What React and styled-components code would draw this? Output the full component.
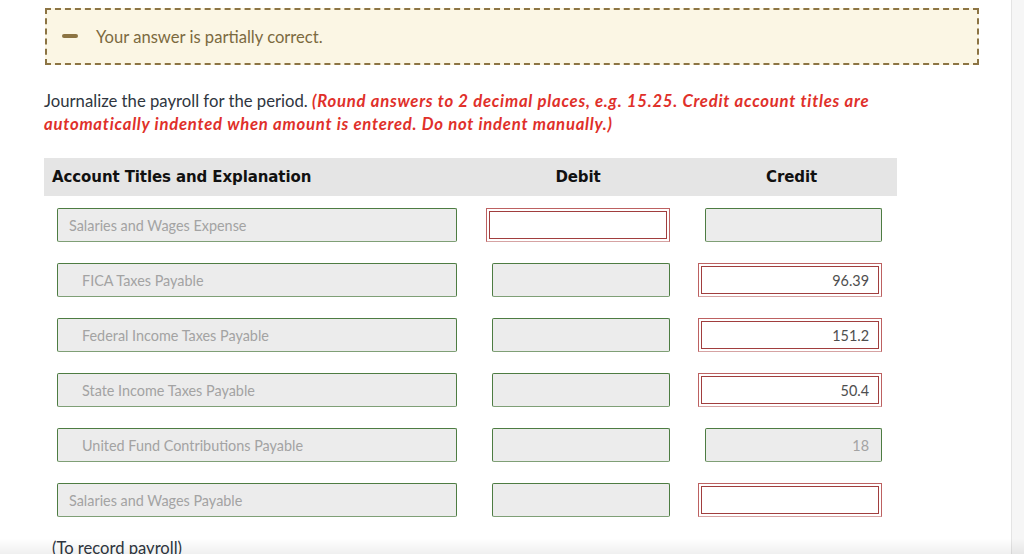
import React from 'react';
import styled, { createGlobalStyle } from 'styled-components';

const GlobalStyle = createGlobalStyle`
  html, body {
    margin: 0;
    padding: 0;
    background: #ffffff;
  }
  body {
    font-family: Lato, "Liberation Sans", sans-serif;
    overflow: hidden;
  }
`;

const Frame = styled.div`
  display: flex;
  width: 1024px;
  height: 554px;
  overflow: hidden;
`;

const Main = styled.main`
  flex: 1;
  padding: 8px 0 0 44px;
`;

const Gutter = styled.div`
  width: 12px;
  border-left: 1px solid #e4e4e4;
  background: #f6f6f6;
`;

const Banner = styled.div`
  display: flex;
  align-items: center;
  gap: 18px;
  box-sizing: border-box;
  margin-left: 1px;
  width: 934px;
  height: 57px;
  padding-left: 15px;
  background: #fbf6e4;
  border: 2px dashed #8c7443;
  font-size: 16.6px;
  color: #7b6a3f;
`;

const Minus = styled.span`
  display: block;
  width: 16px;
  height: 4px;
  border-radius: 2px;
  background: #8c7443;
  margin-top: -2px;
`;

const Instructions = styled.p`
  margin: 25px 0 0;
  width: 880px;
  font-size: 16.7px;
  line-height: 23px;
  color: #2f3640;
`;

const Note = styled.span`
  color: #e0302a;
  font-weight: 700;
  font-style: italic;
  letter-spacing: 0.75px;
`;

const Table = styled.div`
  display: grid;
  grid-template-columns: 430px 212px 211px;
  row-gap: 21px;
  margin-top: 22px;
  width: 853px;
`;

const HeadCell = styled.div`
  display: flex;
  align-items: center;
  justify-content: ${(p) => (p.$center ? 'center' : 'flex-start')};
  height: 38px;
  padding-left: ${(p) => (p.$center ? '0' : '8px')};
  padding-right: ${(p) => p.$pr || 0}px;
  margin-bottom: -9px;
  background: #e5e5e5;
  font-family: "DejaVu Sans", Verdana, sans-serif;
  font-weight: 700;
  font-size: 15px;
  letter-spacing: -0.1px;
  color: #111;
`;

const Cell = styled.div`
  display: flex;
  justify-content: ${(p) => (p.$end ? 'flex-end' : 'flex-start')};
  padding-left: ${(p) => p.$pl || 0}px;
  padding-right: ${(p) => p.$pr || 0}px;
`;

const Field = styled.div`
  box-sizing: border-box;
  display: flex;
  align-items: center;
  justify-content: ${(p) => (p.$num ? 'flex-end' : 'flex-start')};
  width: ${(p) => p.$w}px;
  height: 34px;
  padding: 0 12px 0 ${(p) => (p.$indent ? 24 : 11)}px;
  background: #ececec;
  border: 1px solid #4d7c42;
  border-bottom-color: #7f9f76;
  border-radius: 2px;
  font-size: 14.4px;
  color: #a3a3a3;
`;

const WrongField = styled.div`
  box-sizing: border-box;
  display: flex;
  align-items: center;
  justify-content: flex-end;
  width: ${(p) => p.$w}px;
  height: 34px;
  padding: 0 12px;
  background: #ffffff;
  border: 1px solid #bd6161;
  border-bottom-color: #d6a3a3;
  box-shadow: inset 0 0 0 2px #ffffff, inset 0 0 0 3px #a13e3e;
  font-size: 14.4px;
  color: #4e4e4e;
`;

const Footnote = styled.div`
  margin: 20px 0 0 8px;
  font-size: 16.6px;
  line-height: 23px;
  color: #2f3640;
`;

const BottomShade = styled.div`
  position: fixed;
  left: 0;
  right: 0;
  bottom: 0;
  height: 16px;
  pointer-events: none;
  background: linear-gradient(rgba(0, 0, 0, 0), rgba(0, 0, 0, 0.06));
`;

const rows = [
  { title: 'Salaries and Wages Expense', debit: { wrong: true }, credit: {} },
  { title: 'FICA Taxes Payable', indent: true, debit: {}, credit: { wrong: true, value: '96.39' } },
  { title: 'Federal Income Taxes Payable', indent: true, debit: {}, credit: { wrong: true, value: '151.2' } },
  { title: 'State Income Taxes Payable', indent: true, debit: {}, credit: { wrong: true, value: '50.4' } },
  { title: 'United Fund Contributions Payable', indent: true, debit: {}, credit: { value: '18' } },
  { title: 'Salaries and Wages Payable', debit: {}, credit: { wrong: true } },
];

function Amount({ wrong, value, width }) {
  if (wrong) return <WrongField $w={184}>{value}</WrongField>;
  return <Field $w={width} $num>{value}</Field>;
}

export default function App() {
  return (
    <Frame>
      <GlobalStyle />
      <Main>
        <Banner>
          <Minus />
          <span>Your answer is partially correct.</span>
        </Banner>
        <Instructions>
          Journalize the payroll for the period.{' '}
          <Note>
            (Round answers to 2 decimal places, e.g. 15.25. Credit account titles are
            automatically indented when amount is entered. Do not indent manually.)
          </Note>
        </Instructions>
        <Table>
          <HeadCell>Account Titles and Explanation</HeadCell>
          <HeadCell $center $pr={4}>Debit</HeadCell>
          <HeadCell $center>Credit</HeadCell>
          {rows.map((r) => (
            <React.Fragment key={r.title}>
              <Cell $pl={13}>
                <Field $w={400} $indent={r.indent}>{r.title}</Field>
              </Cell>
              <Cell $end $pr={16}>
                <Amount {...r.debit} width={178} />
              </Cell>
              <Cell $end $pr={15}>
                <Amount {...r.credit} width={177} />
              </Cell>
            </React.Fragment>
          ))}
        </Table>
        <Footnote>(To record payroll)</Footnote>
      </Main>
      <Gutter />
      <BottomShade />
    </Frame>
  );
}
